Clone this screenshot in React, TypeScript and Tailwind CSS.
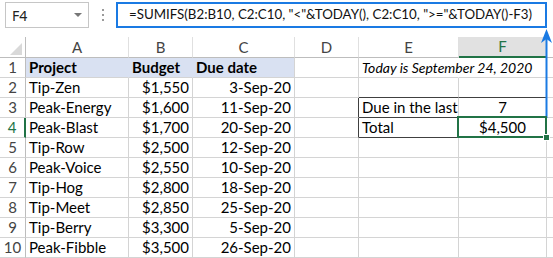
import React from "react";

type Cell = {
  text?: string;
  align?: "left" | "right" | "center";
  cls?: string;
  extra?: React.ReactNode;
};

const gridCols = "grid grid-cols-[26px_103px_64px_102px_64px_100px_88px_1fr]";

const data: [string, string, string][] = [
  ["Tip-Zen", "$1,550", "3-Sep-20"],
  ["Peak-Energy", "$1,600", "11-Sep-20"],
  ["Peak-Blast", "$1,700", "20-Sep-20"],
  ["Tip-Row", "$2,500", "12-Sep-20"],
  ["Peak-Voice", "$2,550", "10-Sep-20"],
  ["Tip-Hog", "$2,800", "18-Sep-20"],
  ["Tip-Meet", "$2,850", "25-Sep-20"],
  ["Tip-Berry", "$3,300", "5-Sep-20"],
  ["Peak-Fibble", "$3,500", "26-Sep-20"],
];

function C({ text, align = "left", cls = "", extra }: Cell) {
  const a =
    align === "right" ? "justify-end pr-[3px]" : align === "center" ? "justify-center" : "justify-start pl-[3px]";
  return (
    <div className={`relative flex items-center h-[20px] whitespace-nowrap ${a} ${cls}`}>
      {text}
      {extra}
    </div>
  );
}

export default function App() {
  const line = "border-r border-b border-[#d4d4d4]";
  const rowHead = "justify-center border-r border-b border-r-[#bdbdbd] border-b-[#d4d4d4] text-[#444]";
  return (
    <div
      className="relative w-[553px] h-[258px] overflow-hidden bg-white text-black"
      style={{ fontFamily: "Lato, 'Liberation Sans', sans-serif" }}
    >
      {/* top bar */}
      <div className="flex items-start h-[37px] pt-[2px]">
        <div className="ml-[5px] w-[84px] h-[26px] border border-[#c6c6c6] flex items-center justify-between pl-[6px] pr-[6px] text-[#222]" style={{ fontFamily: "'Noto Sans', sans-serif" }}>
          <span className="text-[14px]">F4</span>
          <span className="w-0 h-0 border-l-[4px] border-r-[4px] border-t-[4px] border-l-transparent border-r-transparent border-t-[#777]" />
        </div>
        <div className="ml-[13px] mt-[7px] flex flex-col gap-[3px]">
          <span className="block w-[2px] h-[2px] bg-[#9a9a9a]" />
          <span className="block w-[2px] h-[2px] bg-[#9a9a9a]" />
          <span className="block w-[2px] h-[2px] bg-[#9a9a9a]" />
        </div>
        <div className="ml-[12px] w-[431px] h-[26px] border-2 border-[#1a7ae3] flex items-center pl-[11px] text-[13.3px] text-[#111] whitespace-nowrap overflow-hidden">
          =SUMIFS(B2:B10, C2:C10, "&lt;"&amp;TODAY(), C2:C10, "&gt;="&amp;TODAY()-F3)
        </div>
      </div>

      {/* column headers */}
      <div className={`${gridCols} text-[15px] text-[#444]`}>
        <div className="relative h-[21px] border-r border-b border-[#bdbdbd]">
          <div className="absolute left-[10px] top-[6px] w-0 h-0 border-l-[12px] border-b-[12px] border-l-transparent border-b-[#d9d9d9]" />
        </div>
        {["A", "B", "C", "D", "E"].map((l) => (
          <div key={l} className="h-[21px] flex items-center justify-center border-r border-b border-r-[#e0e0e0] border-b-[#bdbdbd]">
            {l}
          </div>
        ))}
        <div className="h-[21px] flex items-center justify-center bg-[#e1e1e1] border-r border-r-[#c8c8c8] border-b-2 border-b-[#217346] text-[#217346]">
          F
        </div>
        <div className="h-[21px] border-b border-[#bdbdbd]" />
      </div>

      {/* rows */}
      <div className="text-[15px]">
        {/* row 1 */}
        <div className={gridCols}>
          <C text="1" align="center" cls={rowHead} />
          <C text="Project" cls="font-bold bg-[#d9e1f2] border-r border-b border-r-[#d9e1f2] border-b-[#d4d4d4]" />
          <C text="Budget" cls="font-bold bg-[#d9e1f2] border-r border-b border-r-[#d9e1f2] border-b-[#d4d4d4]" />
          <C text="Due date" cls="font-bold bg-[#d9e1f2] border-r border-b border-r-[#d4d4d4] border-b-[#d4d4d4]" />
          <C cls={line} />
          <C text="Today is September 24, 2020" cls="italic text-[14px] z-10 border-b border-r border-b-[#d4d4d4] border-r-transparent" />
          <C cls={line} />
          <C cls="border-b border-[#d4d4d4]" />
        </div>
        {data.map((r, i) => {
          const n = i + 2;
          const isR2 = n === 2;
          const isR3 = n === 3;
          const isR4 = n === 4;
          const dBorder = isR3 || isR4 ? "border-r border-b border-r-[#404040] border-b-[#d4d4d4]" : line;
          let eCls = line;
          let fCls = line;
          if (isR2) {
            eCls = "border-r border-b border-r-[#d4d4d4] border-b-[#404040]";
            fCls = "border-r border-b border-r-[#d4d4d4] border-b-[#404040]";
          }
          if (isR3 || isR4) {
            eCls = "border-r border-b border-r-[#d4d4d4] border-b-[#404040]";
            fCls = "border-r border-b border-r-[#404040] border-b-[#404040]";
          }
          return (
            <div key={n} className={gridCols}>
              <C
                text={String(n)}
                align="center"
                cls={
                  isR4
                    ? "justify-center border-b border-b-[#d4d4d4] border-r-2 border-r-[#217346] text-[#217346]"
                    : rowHead
                }
              />
              <C text={r[0]} cls={line} />
              <C text={r[1]} align="right" cls={line} />
              <C text={r[2]} align="right" cls={line} />
              <C cls={dBorder} />
              <C text={isR3 ? "Due in the last" : isR4 ? "Total" : undefined} cls={eCls} />
              <C
                text={isR3 ? "7" : isR4 ? "$4,500" : undefined}
                align="center"
                cls={`${fCls} ${isR4 ? "z-20" : ""}`}
                extra={
                  isR4 ? (
                    <>
                      <div className="absolute -left-[2px] -top-[2px] -right-[1px] -bottom-[1px] border-2 border-[#217346]" />
                      <div className="absolute -right-[4px] -bottom-[4px] w-[7px] h-[7px] bg-[#217346] border border-white" />
                    </>
                  ) : undefined
                }
              />
              <C cls="border-b border-[#d4d4d4]" />
            </div>
          );
        })}
      </div>

      {/* annotation arrow */}
      <svg className="absolute left-[538px] top-[28px]" width="16" height="92" viewBox="0 0 16 92">
        <line x1="8.5" y1="8" x2="8.5" y2="90" stroke="#1a7ae3" strokeWidth="2" />
        <path d="M8.5 1 L14 15 L8.5 11 L3 15 Z" fill="#1a7ae3" />
      </svg>
    </div>
  );
}
